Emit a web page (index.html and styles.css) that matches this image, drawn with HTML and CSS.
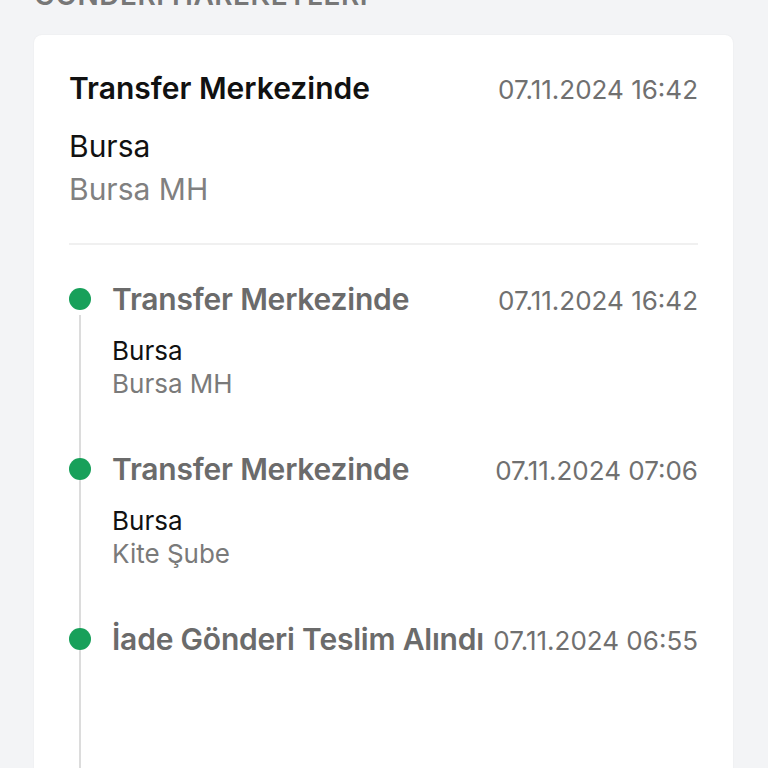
FILE: index.html
```html
<!DOCTYPE html>
<html lang="tr">
<head>
<meta charset="utf-8">
<link rel="stylesheet" href="styles.css">
</head>
<body>
<div class="page">
  <h2 class="section-title">GÖNDERİ HAREKETLERİ</h2>
  <div class="card">
    <div class="head">
      <div class="head-row">
        <div class="head-title">Transfer Merkezinde</div>
        <div class="head-date">07.11.2024 16:42</div>
      </div>
      <div class="head-city">Bursa</div>
      <div class="head-branch">Bursa MH</div>
    </div>
    <div class="divider"></div>
    <div class="timeline">
      <div class="item">
        <div class="dot"></div>
        <div class="item-body">
          <div class="item-row">
            <div class="item-title">Transfer Merkezinde</div>
            <div class="item-date">07.11.2024 16:42</div>
          </div>
          <div class="item-city">Bursa</div>
          <div class="item-branch">Bursa MH</div>
        </div>
      </div>
      <div class="item">
        <div class="dot"></div>
        <div class="item-body">
          <div class="item-row">
            <div class="item-title">Transfer Merkezinde</div>
            <div class="item-date">07.11.2024 07:06</div>
          </div>
          <div class="item-city">Bursa</div>
          <div class="item-branch">Kite Şube</div>
        </div>
      </div>
      <div class="item">
        <div class="dot"></div>
        <div class="item-body">
          <div class="item-row">
            <div class="item-title">İade Gönderi Teslim Alındı</div>
            <div class="item-date">07.11.2024 06:55</div>
          </div>
        </div>
      </div>
    </div>
  </div>
</div>
</body>
</html>
```
FILE: styles.css
```css
* { box-sizing: border-box; }
html, body { margin: 0; padding: 0; }
body {
  background: #f3f4f6;
  font-family: Inter, "Noto Sans", sans-serif;
  width: 768px;
  height: 768px;
  overflow: hidden;
}
.page {
  padding: 0 35px 0 34px;
}
.section-title {
  margin: -22px 0 0 0;
  height: 57px;
  font-size: 28px;
  font-weight: 600;
  color: #777;
  letter-spacing: 0.5px;
  line-height: 34px;
  white-space: nowrap;
}
.card {
  background: #fff;
  border-radius: 8px;
  box-shadow: 0 0 2px rgba(0,0,0,0.06);
  padding: 35px 35px 0 35px;
  height: 800px;
}
.head-row, .item-row {
  display: flex;
  justify-content: space-between;
  align-items: baseline;
  gap: 8px;
}
.head-title {
  font-size: 30px;
  line-height: 36px;
  font-weight: 600;
  color: #111;
}
.head-date, .item-date {
  font-size: 26px;
  color: #707070;
  white-space: nowrap;
  flex: none;
}
.head-city {
  margin-top: 22px;
  font-size: 30px;
  line-height: 36px;
  color: #111;
}
.head-branch {
  font-size: 30px;
  line-height: 36px;
  color: #808080;
  margin-top: 7px;
}
.divider {
  height: 2px;
  background: #f0f0f0;
  margin-top: 36px;
}
.timeline {
  position: relative;
  padding-top: 36px;
}
.timeline::before {
  content: "";
  position: absolute;
  left: 10px;
  top: 70px;
  bottom: 0;
  width: 2px;
  background: #dcdcdc;
}
.item {
  display: flex;
  gap: 21px;
  height: 170px;
}
.dot {
  flex: none;
  width: 22px;
  height: 22px;
  border-radius: 50%;
  background: #17a05a;
  margin-top: 7px;
  position: relative;
}
.item-body { flex: 1; min-width: 0; }
.item-title {
  font-size: 30px;
  line-height: 36px;
  font-weight: 600;
  color: #6b6b6b;
  white-space: nowrap;
  letter-spacing: -0.2px;
}
.item-city {
  margin-top: 18px;
  font-size: 26px;
  line-height: 31px;
  color: #111;
}
.item-branch {
  font-size: 26px;
  line-height: 31px;
  color: #7a7a7a;
  margin-top: 2px;
}
```
